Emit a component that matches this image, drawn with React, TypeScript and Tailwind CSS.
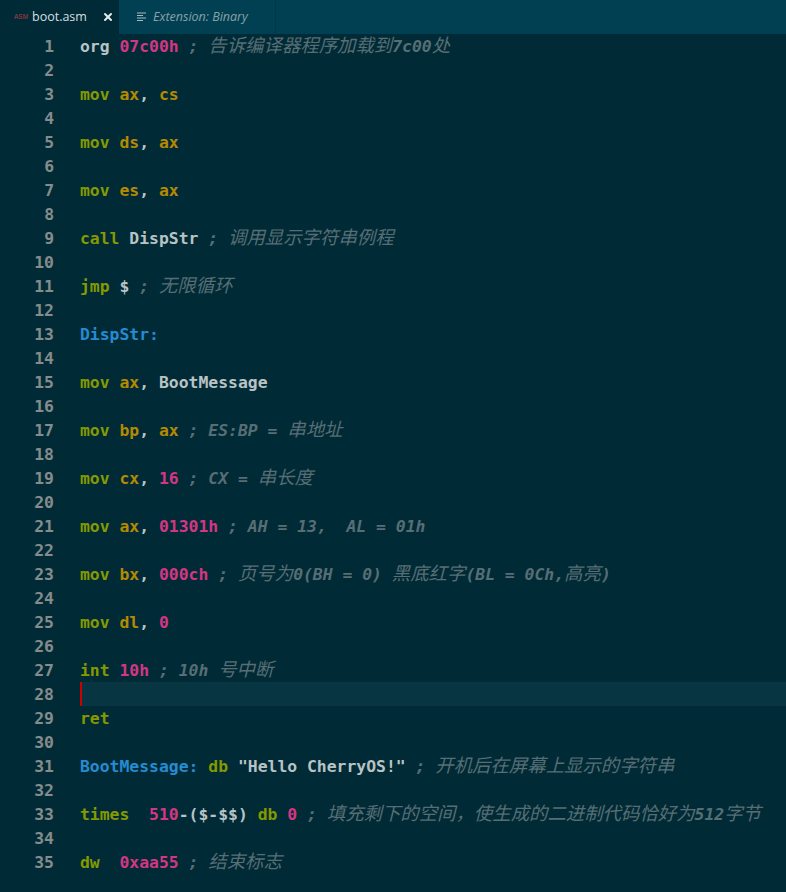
import { X } from "lucide-react";

type Tone = "w" | "k" | "r" | "n" | "l" | "c";
type Seg = [Tone, string];

const tones: Record<Tone, string> = {
  w: "text-[#b9c3c5]",
  k: "text-[#859900]",
  r: "text-[#b58900]",
  n: "text-[#d33682]",
  l: "text-[#268bd2]",
  c: "text-[#586e75] italic",
};

const lines: Seg[][] = [
  [["w", "org "], ["n", "07c00h"], ["c", " ; 告诉编译器程序加载到7c00处"]],
  [],
  [["k", "mov "], ["r", "ax"], ["w", ", "], ["r", "cs"]],
  [],
  [["k", "mov "], ["r", "ds"], ["w", ", "], ["r", "ax"]],
  [],
  [["k", "mov "], ["r", "es"], ["w", ", "], ["r", "ax"]],
  [],
  [["k", "call "], ["w", "DispStr"], ["c", " ; 调用显示字符串例程"]],
  [],
  [["k", "jmp "], ["w", "$"], ["c", " ; 无限循环"]],
  [],
  [["l", "DispStr:"]],
  [],
  [["k", "mov "], ["r", "ax"], ["w", ", BootMessage"]],
  [],
  [["k", "mov "], ["r", "bp"], ["w", ", "], ["r", "ax"], ["c", " ; ES:BP = 串地址"]],
  [],
  [["k", "mov "], ["r", "cx"], ["w", ", "], ["n", "16"], ["c", " ; CX = 串长度"]],
  [],
  [["k", "mov "], ["r", "ax"], ["w", ", "], ["n", "01301h"], ["c", " ; AH = 13,  AL = 01h"]],
  [],
  [["k", "mov "], ["r", "bx"], ["w", ", "], ["n", "000ch"], ["c", " ; 页号为0(BH = 0) 黑底红字(BL = 0Ch,高亮)"]],
  [],
  [["k", "mov "], ["r", "dl"], ["w", ", "], ["n", "0"]],
  [],
  [["k", "int "], ["n", "10h"], ["c", " ; 10h 号中断"]],
  [],
  [["k", "ret"]],
  [],
  [["l", "BootMessage:"], ["k", " db "], ["w", "\"Hello CherryOS!\""], ["c", " ; 开机后在屏幕上显示的字符串"]],
  [],
  [["k", "times  "], ["n", "510"], ["w", "-($-$$) "], ["k", "db "], ["n", "0"], ["c", " ; 填充剩下的空间，使生成的二进制代码恰好为512字节"]],
  [],
  [["k", "dw  "], ["n", "0xaa55"], ["c", " ; 结束标志"]],
];

// CJK runs are set larger so two mono cells hold close to one glyph
function Chunks({ text }: { text: string }) {
  const parts = text.split(/([\u3000-\u9fff\uff00-\uffef]+)/);
  return (
    <>
      {parts.map((part, i) =>
        i % 2 === 1 ? (
          <span key={i} className="font-['Noto_Sans_CJK_SC',sans-serif] text-[18.4px] leading-none font-normal">
            {part}
          </span>
        ) : (
          <span key={i}>{part}</span>
        ),
      )}
    </>
  );
}

export default function App() {
  return (
    <div className="h-[892px] w-[786px] overflow-hidden bg-[#002b36] font-['DejaVu_Sans_Mono',monospace] text-[16.4px] font-bold">
      <div className="flex h-[34px] bg-[#004052] font-['Open_Sans',sans-serif] font-normal">
        <div className="flex w-[119px] items-center bg-[#002b36] pl-[14px]">
          <span className="w-[18px] font-['Liberation_Sans',sans-serif] text-[6.5px] text-[#b03a48]">ASM</span>
          <span className="text-[12.5px] text-[#d6dee0]">boot.asm</span>
          <X size={12} strokeWidth={4} className="ml-[15px] text-[#e4eaeb]" />
        </div>
        <div className="flex w-[157px] items-center gap-[6px] border-r border-[#003847] bg-[#004052] pl-[18px] text-[#8ba1a7] italic">
          <svg width="10" height="10" viewBox="0 0 10 10" className="text-[#a8babf]">
            <path d="M0 1h9M0 3.5h6M0 6h9M0 8.5h6" stroke="currentColor" strokeWidth="1.2" />
          </svg>
          <span className="text-[12.5px]">Extension: Binary</span>
        </div>
      </div>
      <div>
        {lines.map((segs, i) => (
          <div key={i} className="flex h-6 leading-[26px]">
            <span className="h-6 w-[54px] shrink-0 text-right text-[#858c8c]">{i + 1}</span>
            <span
              className={`ml-[26px] block h-6 flex-1 whitespace-pre ${
                i === 27 ? "border-l-2 border-[#cc0000] bg-[#073642]" : ""
              }`}
            >
              {segs.map(([tone, text], j) => (
                <span key={j} className={tones[tone]}>
                  <Chunks text={text} />
                </span>
              ))}
            </span>
          </div>
        ))}
      </div>
    </div>
  );
}
